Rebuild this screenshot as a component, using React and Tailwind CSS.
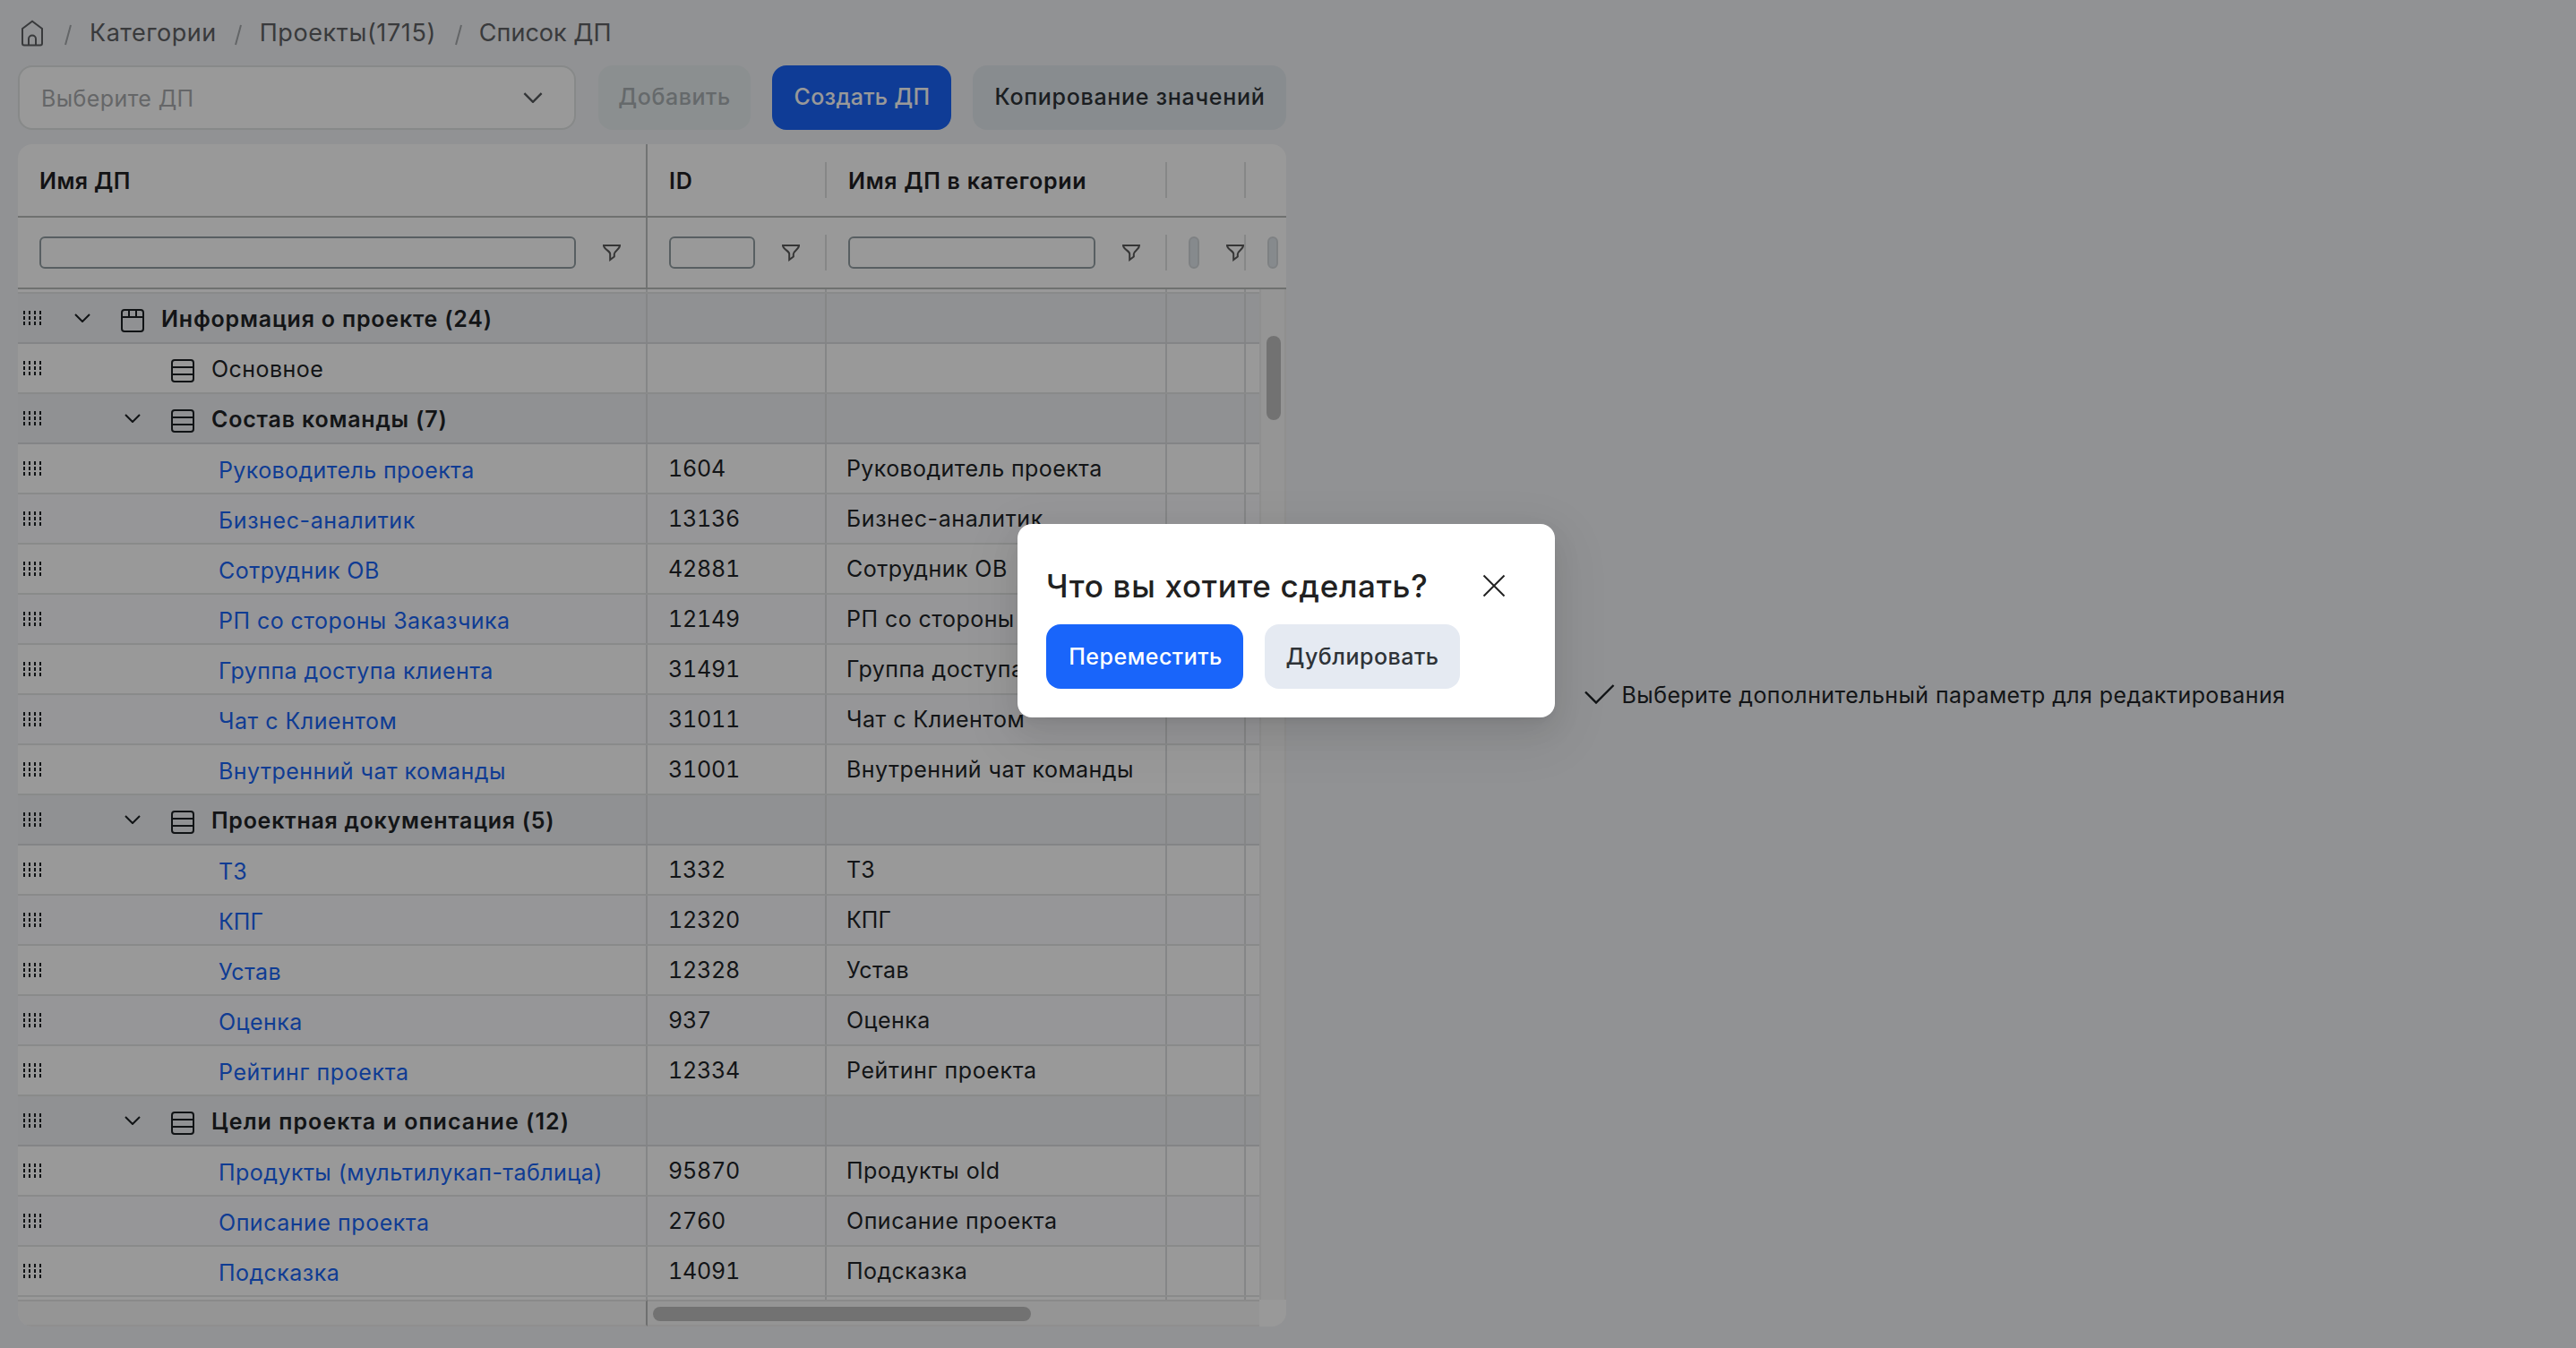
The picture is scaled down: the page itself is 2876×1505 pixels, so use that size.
import React from 'react';

const rows = [
  { kind: 'root', name: 'Информация о проекте (24)', open: true },
  { kind: 'section', name: 'Основное' },
  { kind: 'section', name: 'Состав команды (7)', open: true },
  { kind: 'leaf', name: 'Руководитель проекта', id: '1604', label: 'Руководитель проекта', tracking: 'tracking-[0.4px]' },
  { kind: 'leaf', name: 'Бизнес-аналитик', id: '13136', label: 'Бизнес-аналитик', tracking: 'tracking-[0.6px]' },
  { kind: 'leaf', name: 'Сотрудник ОВ', id: '42881', label: 'Сотрудник ОВ' },
  { kind: 'leaf', name: 'РП со стороны Заказчика', id: '12149', label: 'РП со стороны Заказчика' },
  { kind: 'leaf', name: 'Группа доступа клиента', id: '31491', label: 'Группа доступа клиента' },
  { kind: 'leaf', name: 'Чат с Клиентом', id: '31011', label: 'Чат с Клиентом', tracking: 'tracking-[0.5px]' },
  { kind: 'leaf', name: 'Внутренний чат команды', id: '31001', label: 'Внутренний чат команды' },
  { kind: 'section', name: 'Проектная документация (5)', open: true, tracking: 'tracking-[0.72px]' },
  { kind: 'leaf', name: 'ТЗ', id: '1332', label: 'ТЗ', tracking: 'tracking-[0px]' },
  { kind: 'leaf', name: 'КПГ', id: '12320', label: 'КПГ', tracking: 'tracking-[0px]' },
  { kind: 'leaf', name: 'Устав', id: '12328', label: 'Устав' },
  { kind: 'leaf', name: 'Оценка', id: '937', label: 'Оценка' },
  { kind: 'leaf', name: 'Рейтинг проекта', id: '12334', label: 'Рейтинг проекта', tracking: 'tracking-[0.6px]' },
  { kind: 'section', name: 'Цели проекта и описание (12)', open: true, tracking: 'tracking-[1.05px]' },
  { kind: 'leaf', name: 'Продукты (мультилукап-таблица)', id: '95870', label: 'Продукты old', tracking: 'tracking-[0.45px]' },
  { kind: 'leaf', name: 'Описание проекта', id: '2760', label: 'Описание проекта', tracking: 'tracking-[0.53px]' },
  { kind: 'leaf', name: 'Подсказка', id: '14091', label: 'Подсказка' },
];

const columns = 'grid shrink-0 grid-cols-[703px_200px_380px_88px_15px]';

function HomeIcon() {
  return (
    <svg width="24" height="30" viewBox="0 0 24 30" fill="none" stroke="currentColor" strokeWidth="2">
      <path d="M1 10 12 1.8 23 10V26.5A2 2 0 0 1 21 28.5H3A2 2 0 0 1 1 26.5ZM8 28.5V21.5A4 4 0 0 1 16 21.5V28.5" />
    </svg>
  );
}

function Slash() {
  return (
    <svg width="9" height="24" viewBox="0 0 9 24" stroke="currentColor" strokeWidth="2">
      <path d="M8 1 2 23" />
    </svg>
  );
}

function Chevron({ className }) {
  return (
    <svg className={className} viewBox="0 0 18 10" fill="none" stroke="currentColor" strokeWidth="2">
      <path d="M1 1 9 9 17 1" />
    </svg>
  );
}

function DragIcon() {
  return (
    <svg className="h-4 w-5 shrink-0" viewBox="0 0 20 16" stroke="#1c2023" strokeWidth="2">
      <path d="M1 0V16M7 0V16M13 0V16M19 0V16" strokeDasharray="4 2" />
    </svg>
  );
}

function TabIcon() {
  return (
    <svg className="mt-1.5 size-[26px] shrink-0" viewBox="0 0 26 26" fill="none" stroke="#1c2023" strokeWidth="2">
      <rect x="1" y="1" width="24" height="24" rx="3" />
      <path d="M1 9H25M9 1V9M17 1V9" />
    </svg>
  );
}

function SectionIcon() {
  return (
    <svg className="mt-1.5 size-[26px] shrink-0" viewBox="0 0 26 26" fill="none" stroke="#1c2023" strokeWidth="2">
      <rect x="1" y="1" width="24" height="24" rx="3" />
      <path d="M1 9H25M1 17H25" />
    </svg>
  );
}

function FilterIcon() {
  return (
    <svg className="h-5 w-[22px] shrink-0" viewBox="0 0 22 20" fill="none" stroke="#5a5a5a" strokeWidth="2">
      <path d="M2 2H20C20 6.500 13.800 8 13.800 11.500V14.500L9.200 18V11.500C9.200 8 2 6.500 2 2Z" />
    </svg>
  );
}

function IconSlot({ children }) {
  return <span className="ml-[34px] flex items-center">{children}</span>;
}

function NameCell({ row }) {
  const group = row.open;
  return (
    <div className="flex items-center border-r-2 border-[#dedfe1] pl-1.5">
      <DragIcon />
      {row.kind === 'root' && (
        <>
          <Chevron className="ml-[37px] h-2.5 w-[18px] text-[#1c2023]" />
          <IconSlot><TabIcon /></IconSlot>
        </>
      )}
      {row.kind === 'section' && (
        <>
          <span className="ml-[93px] flex w-[18px]">
            {group && <Chevron className="h-2.5 w-[18px] text-[#1c2023]" />}
          </span>
          <IconSlot><SectionIcon /></IconSlot>
        </>
      )}
      {row.kind === 'leaf' ? (
        <a className={`ml-[198px] mt-[3px] text-[#1965f6] ${row.tracking || 'tracking-[0.45px]'}`}>{row.name}</a>
      ) : (
        <span className={`ml-[19px] mt-0.5 ${group ? 'font-semibold' : ''} ${row.tracking || (group ? 'tracking-[0.8px]' : 'tracking-[0.45px]')}`}>{row.name}</span>
      )}
    </div>
  );
}

function Row({ row, index }) {
  const tone = row.open
    ? 'border-[#dadce0] bg-[#f1f2f5]'
    : index % 2 === 0
      ? 'border-[#e5e7e6] bg-[#fafbfe]'
      : 'border-[#e5e7e6] bg-white';
  return (
    <div className={`${columns} h-14 border-b-2 ${tone}`}>
      <NameCell row={row} />
      <div className="flex items-center border-r-2 border-[#dedfe1] pb-px pl-[23px] tabular-nums tracking-[-0.2px]">{row.id}</div>
      <div className={`flex items-center whitespace-nowrap border-r-2 border-[#dedfe1] pb-px pl-[22px] ${row.tracking || 'tracking-[0.45px]'}`}>{row.label}</div>
      <div className="border-r-2 border-[#dedfe1]" />
      <div />
    </div>
  );
}

function RowSliver({ className }) {
  return (
    <div className={`${columns} ${className}`}>
      <div className="border-r-2 border-[#dedfe1]" />
      <div className="border-r-2 border-[#dedfe1]" />
      <div className="border-r-2 border-[#dedfe1]" />
      <div className="border-r-2 border-[#dedfe1]" />
      <div />
    </div>
  );
}

function HeaderCell({ children, className }) {
  return (
    <div className={`flex h-10 items-center self-center border-r-2 border-[#dfe1e1] pl-6 ${className || ''}`}>{children}</div>
  );
}

function FilterInput({ className }) {
  return <div className={`h-9 border-2 ${className}`} />;
}

function Grid() {
  return (
    <div className="flex h-[1320px] w-[1416px] flex-col overflow-hidden rounded-2xl bg-white text-[25px] leading-[30px] text-[#212427]">
      <div className={`${columns} h-[82px] border-b-2 border-[#babcbb] font-semibold tracking-[0.75px] text-[#1f2123]`}>
        <div className="flex items-center border-r-2 border-[#bfc1c1] pl-6 pt-0.5 tracking-[0.4px]">Имя ДП</div>
        <HeaderCell className="pt-0.5">ID</HeaderCell>
        <HeaderCell className="pt-0.5 tracking-[0.7px]">Имя ДП в категории</HeaderCell>
        <HeaderCell />
        <div />
      </div>
      <div className="flex h-20 shrink-0 border-b-2 border-[#babcbb]">
        <div className="flex w-[703px] items-center border-r-2 border-[#bfc1c1] pl-6">
          <FilterInput className="w-[599px] rounded-md border-[#939fa3]" />
          <span className="ml-[29px]"><FilterIcon /></span>
        </div>
        <HeaderCell className="w-[200px]">
          <FilterInput className="w-24 rounded-md border-[#939fa3]" />
          <span className="ml-[29px]"><FilterIcon /></span>
        </HeaderCell>
        <HeaderCell className="w-[380px]">
          <FilterInput className="w-[276px] rounded-md border-[#939fa3]" />
          <span className="ml-[29px]"><FilterIcon /></span>
        </HeaderCell>
        <HeaderCell className="w-[88px]">
          <FilterInput className="w-3 shrink-0 rounded-md border-[#d3d8db] bg-[#e0e6ec]" />
          <span className="-mr-1 ml-[29px]"><FilterIcon /></span>
        </HeaderCell>
        <div className="flex items-center pl-6">
          <FilterInput className="w-3 rounded-md border-[#d3d8db] bg-[#e0e6ec]" />
        </div>
      </div>
      <div className="flex h-[1128px] shrink-0">
        <div className="flex w-[1386px] flex-col">
          <RowSliver className="h-[5px] border-b-2 border-[#e5e7e6]" />
          {rows.map((row, i) => <Row key={i} row={row} index={i} />)}
          <RowSliver className="h-[3px]" />
        </div>
        <div className="w-[30px] border-x-2 border-[#eeeeee] bg-[#f9f9f9] pl-1.5 pt-[52px]">
          <div className="h-[94px] w-4 rounded-full bg-[#bfbfbf]" />
        </div>
      </div>
      <div className="flex h-[30px] shrink-0">
        <div className="w-[703px] border-y-2 border-r-2 border-b-[#eeeeee] border-r-[#b9bbbb] border-t-[#e6e6e6] bg-[#f9f9f9]" />
        <div className="w-[683px] border-y-2 border-b-[#eeeeee] border-t-[#e6e6e6] bg-[#f9f9f9] pl-1.5 pt-1.5">
          <div className="h-4 w-[422px] rounded-full bg-[#bfbfbf]" />
        </div>
      </div>
    </div>
  );
}

function Breadcrumbs() {
  return (
    <nav className="flex h-[73px] items-center pl-1 text-[27px] tracking-[0.5px] text-[#5f6265]">
      <HomeIcon />
      <span className="ml-[23px] mt-1 text-[#a5a9ac]"><Slash /></span>
      <span className="ml-[20px] pt-0.5">Категории</span>
      <span className="ml-[19px] mt-1 text-[#a5a9ac]"><Slash /></span>
      <span className="ml-5 pt-0.5 tracking-[0.6px]">Проекты(1715)</span>
      <span className="ml-5 mt-1 text-[#a5a9ac]"><Slash /></span>
      <span className="ml-[19px] pt-0.5 tracking-[0px]">Список ДП</span>
    </nav>
  );
}

function Toolbar() {
  return (
    <div className="flex h-[72px] text-[25px]">
      <div className="flex w-[623px] items-center rounded-2xl border-2 border-[#e1e4e4] bg-white pl-6 pr-[34px] tracking-[0.4px] text-[#a8abad]">
        <span className="flex-1 pt-[3px]">Выберите ДП</span>
        <Chevron className="mr-px h-3 w-[22px] text-[#55595c]" />
      </div>
      <div className="ml-[25px] flex w-[170px] items-center justify-center rounded-2xl bg-[#e8eef0] font-medium tracking-[0.55px] text-[#a9b0b3]">Добавить</div>
      <div className="ml-6 flex w-[200px] items-center justify-center rounded-2xl bg-[#1965fa] pl-px font-medium tracking-[0.3px] text-white">Создать ДП</div>
      <div className="ml-6 flex w-[350px] items-center justify-center rounded-2xl bg-[#e3e9ee] pl-px font-medium tracking-[0.7px] text-[#2e3338]">Копирование значений</div>
    </div>
  );
}

function Dialog() {
  return (
    <div className="flex h-[216px] w-[600px] flex-col rounded-2xl bg-white pl-8 pt-10 shadow-[0_12px_32px_0_rgba(0,0,0,0.08),0_6px_12px_-8px_rgba(0,0,0,0.12),0_18px_56px_16px_rgba(0,0,0,0.05)]">
      <div className="flex h-[58px] items-center">
        <h2 className="w-[487px] text-[35px] font-medium tracking-[0.7px] text-[#212121]">Что вы хотите сделать?</h2>
        <svg className="mb-px size-[26px]" viewBox="0 0 26 26" stroke="#222222" strokeWidth="2">
          <path d="M1.500 1.500 24.500 24.500M24.500 1.500 1.500 24.500" />
        </svg>
      </div>
      <div className="mt-3.5 flex h-[72px] gap-6 text-[25px] font-medium tracking-[0.5px]">
        <button className="w-[220px] rounded-2xl bg-[#1965fa] pl-0.5 pt-px text-white">Переместить</button>
        <button className="w-[218px] rounded-2xl bg-[#e5eaf2] pt-px text-[#2e3338]">Дублировать</button>
      </div>
    </div>
  );
}

export default function App() {
  return (
    <div className="relative h-[1505px] w-[2876px] overflow-hidden bg-[#f2f4f7] font-['Inter',sans-serif]">
      <div className="flex h-full">
        <main className="w-[1436px] shrink-0 pl-5">
          <Breadcrumbs />
          <Toolbar />
          <div className="h-4" />
          <Grid />
        </main>
        <aside className="flex flex-1 items-center justify-center pl-2 pt-12 text-[25px] tracking-[0.41px] text-[#212427]">
          <svg className="mb-1 mr-2 h-[22px] w-[34px]" viewBox="0 0 34 22" fill="none" stroke="#1c2023" strokeWidth="2.4">
            <path d="M1 8.500 13 20.500 32.500 1" />
          </svg>
          <span>Выберите дополнительный параметр для редактирования</span>
        </aside>
      </div>
      <div className="absolute inset-0 flex items-start justify-center bg-black/40 pr-1 pt-[585px]">
        <Dialog />
      </div>
    </div>
  );
}
